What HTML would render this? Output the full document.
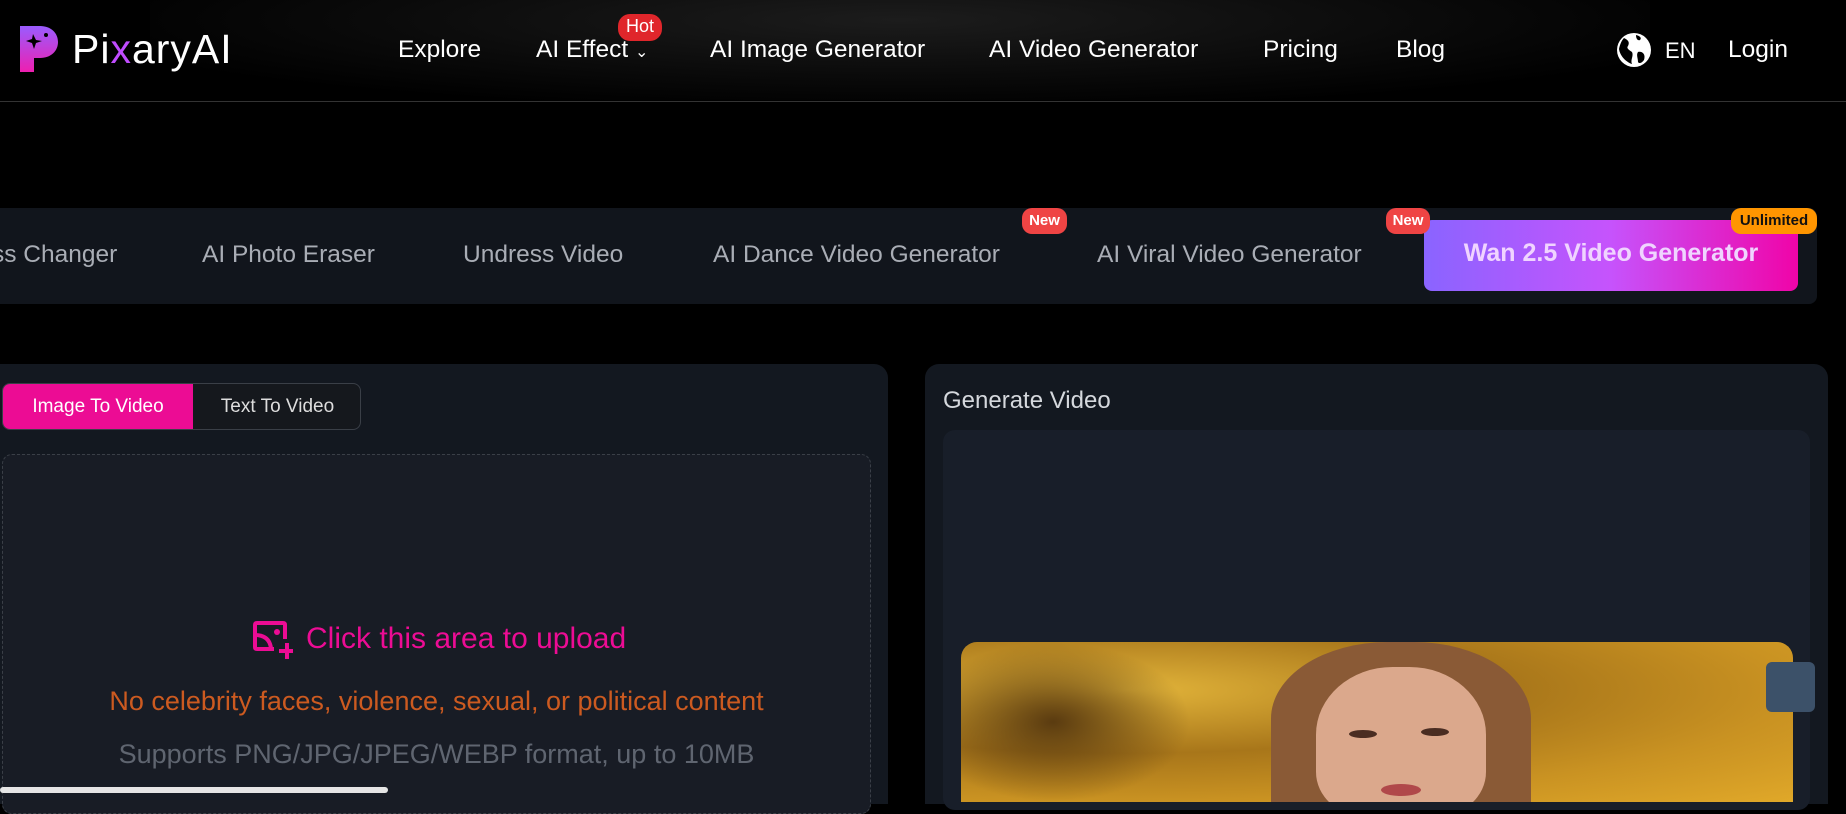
<!DOCTYPE html>
<html><head><meta charset="utf-8"><style>
*{margin:0;padding:0;box-sizing:border-box}
body{width:1846px;height:791px;background:#000;overflow:hidden;position:relative;font-family:"Liberation Sans",sans-serif;color:#fff}
.a{position:absolute;white-space:nowrap}
.nav{font-size:24.5px;top:36px;color:#fff}
.tab{font-size:24.5px;top:241px;color:#a9adb5}
.badge{position:absolute;border-radius:10px;font-size:15px;font-weight:bold;text-align:center;line-height:25px}
</style></head><body>
<div class="a" style="left:150px;top:0;width:1500px;height:100px;background:radial-gradient(ellipse at 50% 20%,#1c1c1c 0%,#0a0a0a 50%,#000 80%)"></div>
<div class="a" style="left:0;top:101px;width:1846px;height:1px;background:#333"></div>
<svg class="a" style="left:20px;top:26px" width="38" height="46" viewBox="0 0 38 46"><defs><linearGradient id="g" x1="0" y1="0" x2="0" y2="1"><stop offset="0" stop-color="#9a5cff"/><stop offset="1" stop-color="#ee1fb0"/></linearGradient></defs><path d="M0 0H20C31 0 38 7 38 16C38 25 31 32 20 32H14V46H0Z" fill="url(#g)"/><path d="M13 8L16 14L22 15L16 17L14 23L12 17L6 15L12 13Z" fill="#000"/><circle cx="26" cy="9" r="2" fill="#000"/></svg>
<div class="a" style="left:72px;top:26px;font-size:41px;color:#fff;letter-spacing:1px">Pi<span style="color:#c04cff">x</span>aryAI</div>
<div class="a nav" style="left:398px">Explore</div>
<div class="a nav" style="left:536px">AI Effect <span style="font-size:16px">&#8964;</span></div>
<div class="badge" style="left:618px;top:14px;width:44px;height:27px;background:#e0262b;font-weight:normal;font-size:18px;border-radius:12px">Hot</div>
<div class="a nav" style="left:710px">AI Image Generator</div>
<div class="a nav" style="left:989px">AI Video Generator</div>
<div class="a nav" style="left:1263px">Pricing</div>
<div class="a nav" style="left:1396px">Blog</div>
<svg class="a" style="left:1616px;top:32px" width="36" height="36" viewBox="0 0 36 36"><circle cx="18" cy="18" r="17" fill="#fff"/><path d="M8 6C12 8 14 10 12 14C10 16 13 18 16 20C18 24 14 28 16 32C10 30 4 24 3 17C4 12 6 8 8 6ZM22 20C26 19 30 22 28 28C26 31 23 32 22 30C22 26 20 23 22 20ZM20 3C24 4 26 6 24 8C22 9 20 7 20 3Z" fill="#000"/></svg>
<div class="a nav" style="left:1665px;font-size:22px;top:38px">EN</div>
<div class="a nav" style="left:1728px">Login</div>

<div class="a" style="left:0;top:208px;width:1817px;height:96px;background:#11151c;border-radius:0 8px 8px 0"></div>
<div class="a tab" style="left:-8px">ss Changer</div>
<div class="a tab" style="left:202px">AI Photo Eraser</div>
<div class="a tab" style="left:463px">Undress Video</div>
<div class="a tab" style="left:713px">AI Dance Video Generator</div>
<div class="a tab" style="left:1097px">AI Viral Video Generator</div>
<div class="a" style="left:1424px;top:220px;width:374px;height:71px;border-radius:8px;background:linear-gradient(90deg,#8a64ff,#c653fc 50%,#f004a8)"></div>
<div class="a" style="left:1424px;top:239px;width:374px;text-align:center;font-size:25px;font-weight:bold;color:#f0d4ff">Wan 2.5 Video Generator</div>
<div class="badge" style="left:1022px;top:208px;width:45px;height:26px;background:#ef4444">New</div>
<div class="badge" style="left:1386px;top:208px;width:44px;height:26px;background:#ef4444">New</div>
<div class="badge" style="left:1731px;top:208px;width:86px;height:26px;background:#ff9500;color:#111">Unlimited</div>

<div class="a" style="left:0;top:364px;width:888px;height:440px;background:#131820;border-radius:0 14px 0 0"></div>
<div class="a" style="left:2px;top:383px;width:359px;height:47px;border:1px solid #3a3f47;border-radius:8px;background:#15181d;overflow:hidden">
<div class="a" style="left:0;top:0;width:190px;height:47px;background:#ec0c94"></div>
<div class="a" style="left:0;top:12px;width:190px;text-align:center;font-size:19px">Image To Video</div>
<div class="a" style="left:190px;top:12px;width:169px;text-align:center;font-size:19px;color:#ddd">Text To Video</div></div>
<div class="a" style="left:2px;top:454px;width:869px;height:360px;border:1px dashed #3a3f47;border-radius:10px;background:#181c25"></div>
<svg class="a" style="left:253px;top:621px" width="40" height="38" viewBox="0 0 40 38"><path d="M21 28H4Q2 28 2 26V4Q2 2 4 2H30Q32 2 32 4V18" fill="none" stroke="#ec0c94" stroke-width="4"/><path d="M2 14Q16 14 18 27" fill="none" stroke="#ec0c94" stroke-width="4"/><circle cx="24" cy="11" r="3" fill="#ec0c94"/><path d="M34 22V38M26 30H40" stroke="#ec0c94" stroke-width="4"/></svg>
<div class="a" style="left:306px;top:622px;font-size:30px;color:#ec0c94">Click this area to upload</div>
<div class="a" style="left:0;top:686px;width:873px;text-align:center;font-size:27px;color:#cc5a20">No celebrity faces, violence, sexual, or political content</div>
<div class="a" style="left:0;top:739px;width:873px;text-align:center;font-size:27px;color:#5f6570">Supports PNG/JPG/JPEG/WEBP format, up to 10MB</div>
<div class="a" style="left:0;top:787px;width:388px;height:6px;background:#e5e5e5;border-radius:3px"></div>

<div class="a" style="left:925px;top:364px;width:903px;height:440px;background:#131820;border-radius:14px 14px 0 0"></div>
<div class="a" style="left:943px;top:387px;font-size:24px;color:#d5d8dd">Generate Video</div>
<div class="a" style="left:943px;top:430px;width:867px;height:380px;background:#181e29;border-radius:12px"></div>
<div class="a" style="left:961px;top:642px;width:832px;height:160px;border-radius:16px 16px 0 0;overflow:hidden;background:radial-gradient(ellipse at 20% 30%,#e2b43a,#a8761a 40%,#c99222 70%,#e0a829)">
<div class="a" style="left:0;top:0;width:230px;height:160px;background:radial-gradient(ellipse at 40% 50%,#5a3b10,transparent 70%)"></div>
<div class="a" style="left:310px;top:0;width:260px;height:170px;border-radius:45% 45% 0 0;background:#8a5a36"></div>
<div class="a" style="left:355px;top:25px;width:170px;height:150px;border-radius:45% 45% 30% 30%;background:#dba88c"></div>
<div class="a" style="left:388px;top:88px;width:28px;height:8px;border-radius:50%;background:#4a2d22"></div>
<div class="a" style="left:460px;top:86px;width:28px;height:8px;border-radius:50%;background:#4a2d22"></div>
<div class="a" style="left:420px;top:142px;width:40px;height:12px;border-radius:50%;background:#b0484a"></div>
</div>
<div class="a" style="left:1766px;top:662px;width:49px;height:50px;background:#3c5169;border-radius:6px"></div>
</body></html>
